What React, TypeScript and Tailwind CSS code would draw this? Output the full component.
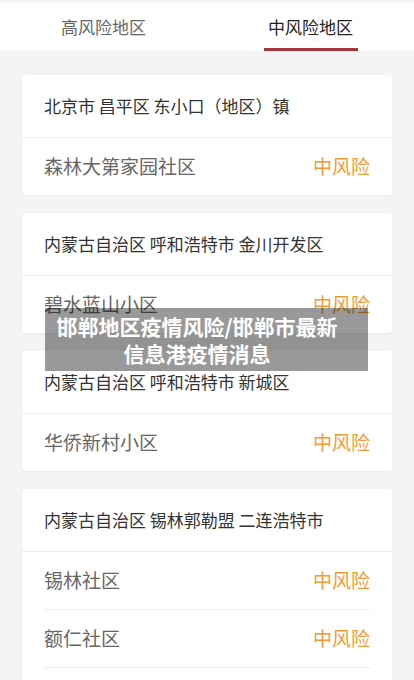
const areas = [
  { title: "北京市 昌平区 东小口（地区）镇", items: ["森林大第家园社区"] },
  { title: "内蒙古自治区 呼和浩特市 金川开发区", items: ["碧水蓝山小区"] },
  { title: "内蒙古自治区 呼和浩特市 新城区", items: ["华侨新村小区"] },
  { title: "内蒙古自治区 锡林郭勒盟 二连浩特市", items: ["锡林社区", "额仁社区", "宝力格社区"] },
];

function AreaCard({ title, items }: { title: string; items: string[] }) {
  return (
    <div className="mx-[22px] rounded-[4px] bg-white shadow-[0_1px_3px_rgba(0,0,0,0.04)]">
      <div className="flex h-[63px] items-center border-b border-[#ececec] px-[22px] text-[17px] text-[#333]">
        {title}
      </div>
      {items.map((name, i) => (
        <div key={name} className="px-[22px]">
          <div
            className={
              i < items.length - 1
                ? "flex h-[58px] items-center justify-between border-b border-[#ececec]"
                : "flex h-[57px] items-center justify-between"
            }
          >
            <span className="text-[19px] text-[#666]">{name}</span>
            <span className="text-[19px] text-[#ef9d33]">中风险</span>
          </div>
        </div>
      ))}
    </div>
  );
}

export default function App() {
  return (
    <div
      className="relative h-[680px] overflow-hidden bg-[#f4f4f4] pt-[3px]"
      style={{ fontFamily: '"Noto Sans CJK SC", "Noto Sans", sans-serif' }}
    >
      {/* tabs */}
      <div className="flex h-[48px] bg-white">
        <div className="flex flex-1 items-center justify-center text-[17px] text-[#666]">
          高风险地区
        </div>
        <div className="relative flex flex-1 items-center justify-center text-[17px] text-[#222]">
          中风险地区
          <span className="absolute bottom-0 left-1/2 h-[3px] w-[94px] -translate-x-1/2 bg-[#a6343f]" />
        </div>
      </div>

      <div className="flex flex-col gap-[18px] pt-[24px]">
        {areas.map((a) => (
          <AreaCard key={a.title} title={a.title} items={a.items} />
        ))}
      </div>

      {/* title overlay */}
      <div className="absolute left-[45px] top-[308px] flex h-[63px] w-[323px] flex-col justify-center bg-black/40 pl-[8px] pr-[27px] text-center text-[21px] font-bold leading-[27px] text-white">
        <div>邯郸地区疫情风险/邯郸市最新</div>
        <div>信息港疫情消息</div>
      </div>
    </div>
  );
}
